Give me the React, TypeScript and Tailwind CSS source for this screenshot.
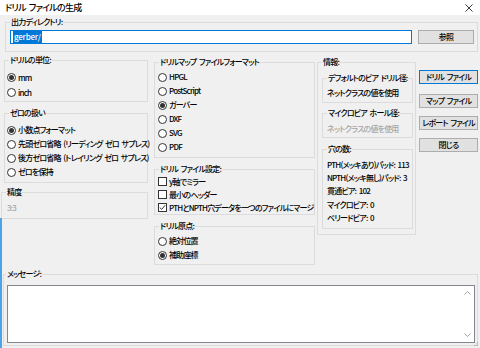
import type { ReactNode } from 'react'

const font = "font-['Noto_Sans_CJK_JP','Noto_Sans',sans-serif] [font-feature-settings:'palt']"

function Group({ label, className = '', legendClass = 'ml-[4px]', children }: { label: string; className?: string; legendClass?: string; children: ReactNode }) {
  return (
    <fieldset className={`m-0 min-w-0 border border-[#dcdcdc] p-0 ${className}`}>
      <legend className={`${legendClass} whitespace-nowrap px-[1px] leading-[12px]`}>{label}</legend>
      {children}
    </fieldset>
  )
}

function Radio({ label, checked = false, h = 'h-[14px]' }: { label: string; checked?: boolean; h?: string }) {
  return (
    <div className={`flex items-center gap-[2px] ${h}`}>
      <span className="flex h-[9px] w-[9px] shrink-0 items-center justify-center rounded-full border border-[#333] bg-white">
        {checked && <span className="h-[5px] w-[5px] rounded-full bg-[#333]" />}
      </span>
      <span className="whitespace-pre">{label}</span>
    </div>
  )
}

function Check({ label, checked = false }: { label: string; checked?: boolean }) {
  return (
    <div className="flex h-[13px] items-center gap-[2px]">
      <span className="flex h-[9px] w-[9px] shrink-0 items-center justify-center border border-[#333] bg-white">
        {checked && (
          <svg width="7" height="7" viewBox="0 0 7 7">
            <path d="M0.8 3.6 L2.7 5.4 L6.2 1.2" fill="none" stroke="#333" strokeWidth="1" />
          </svg>
        )}
      </span>
      <span className="whitespace-pre">{label}</span>
    </div>
  )
}

function Btn({ label, primary = false, className = '' }: { label: string; primary?: boolean; className?: string }) {
  return (
    <div
      className={`flex h-[14px] items-center justify-center whitespace-pre border bg-[#e1e1e1] ${primary ? 'border-[#0078d7]' : 'border-[#adadad]'} ${className}`}
    >
      {label}
    </div>
  )
}

export default function App() {
  return (
    <div
      className={`relative h-[348px] w-[480px] overflow-hidden bg-[#f0f0f0] text-[8px] font-medium leading-[12px] tracking-[-0.8px] text-black [word-spacing:1.5px] ${font}`}
    >
      {/* title bar */}
      <div className="flex h-[15px] items-center justify-between bg-white pl-[5px] pr-[7px] text-[9px] tracking-[-0.7px]">
        <span className="whitespace-pre">ドリル ファイルの生成</span>
        <svg width="8" height="8" viewBox="0 0 8 8">
          <path d="M0.5 0.5 L7.5 7.5 M7.5 0.5 L0.5 7.5" stroke="#222" strokeWidth="0.9" />
        </svg>
      </div>

      <div className="px-[4px]">
        {/* output directory */}
        <Group label="出力ディレクトリ:" className="ml-[1px] mt-[1px] w-[473px]">
          <div className="flex items-center gap-[6px] pb-[7px] pl-[4px] pr-[3px] pt-[2px]">
            <div className="flex h-[14px] flex-1 items-center border border-[#0078d7] bg-white pl-[2px]">
              <span className="bg-[#0078d7] px-[1px] tracking-[-0.2px] text-white">gerber/</span>
            </div>
            <Btn label="参照" className="w-[56px]" />
          </div>
        </Group>

        <div className="mt-[2px] flex items-start">
          {/* left column */}
          <div className="w-[144px] shrink-0">
            <Group label="ドリルの単位:">
              <div className="pb-[1px] pl-[2px] pt-[4px]">
                <Radio label="mm" checked h="h-[15px]" />
                <Radio label="inch" h="h-[15px]" />
              </div>
            </Group>
            <Group label="ゼロの扱い" className="mt-[5px]">
              <div className="pb-[3px] pl-[2px] pt-[4px]">
                <Radio label="小数点フォーマット" checked />
                <Radio label="先頭ゼロ省略 (リーディング ゼロ サプレス)" />
                <Radio label="後方ゼロ省略 (トレイリング ゼロ サプレス)" />
                <Radio label="ゼロを保持" />
              </div>
            </Group>
            <Group label="精度" className="-ml-[3px] mt-[3px] w-[147px]">
              <div className="my-[3px] flex h-[14px] items-center pl-[5px] text-[#a6a6a6]">3:3</div>
            </Group>
          </div>

          {/* middle column */}
          <div className="ml-[6px] mt-[2px] w-[161px] shrink-0">
            <Group label="ドリルマップ ファイルフォーマット">
              <div className="pb-[3px] pl-[3px] pt-[2px]">
                <Radio label="HPGL" />
                <Radio label="PostScript" />
                <Radio label="ガーバー" checked />
                <Radio label="DXF" />
                <Radio label="SVG" />
                <Radio label="PDF" />
              </div>
            </Group>
            <Group label="ドリル ファイル設定:" className="mt-[5px]">
              <div className="pl-[3px]">
                <Check label="y軸でミラー" />
                <Check label="最小のヘッダー" />
                <Check label="PTHとNPTH穴データを一つのファイルにマージ" checked />
              </div>
            </Group>
            <Group label="ドリル原点:" className="mt-[5px]">
              <div className="pb-[2px] pl-[3px] pt-[2px]">
                <Radio label="絶対位置" />
                <Radio label="補助座標" checked />
              </div>
            </Group>
          </div>

          {/* info column */}
          <div className="ml-[2px] mt-[2px] w-[99px] shrink-0">
            <Group label="情報:">
              <div className="pb-[5px] pl-[4px] pr-[2px] pt-[4px]">
                <Group label="デフォルトのビア ドリル径:">
                  <div className="my-[2px] flex h-[14px] items-center whitespace-nowrap pl-[4px]">ネットクラスの値を使用</div>
                </Group>
                <Group label="マイクロビア ホール径:" className="mt-[4px]">
                  <div className="mb-[1px] mt-[3px] flex h-[14px] items-center whitespace-nowrap pl-[4px] text-[#a6a6a6]">
                    ネットクラスの値を使用
                  </div>
                </Group>
                <Group label="穴の数:" className="mt-[5px]">
                  <div className="pb-[3px] pl-[4px] pt-[3px]">
                    {['PTH(メッキあり)パッド: 113', 'NPTH(メッキ無し)パッド: 3', '貫通ビア: 102', 'マイクロビア: 0', 'ベリードビア: 0'].map((t) => (
                      <div key={t} className="flex h-[13.4px] items-center whitespace-pre">
                        {t}
                      </div>
                    ))}
                  </div>
                </Group>
              </div>
            </Group>
          </div>

          {/* buttons */}
          <div className="ml-[3px] mt-[16px] w-[59px] shrink-0">
            <Btn label="ドリル ファイル" primary />
            <Btn label="マップ ファイル" className="mt-[10px]" />
            <Btn label="レポート ファイル" className="mt-[8px]" />
            <Btn label="閉じる" className="mt-[8px]" />
          </div>
        </div>

        {/* messages */}
        <Group label="メッセージ:" className="-ml-[1px] mt-[3px] w-[475px]" legendClass="ml-[2px]">
          <div className="pb-[2px] pl-[3px] pt-[5px]">
            <div className="flex h-[58px] w-[468px] border border-[#828790] bg-white">
              <div className="flex-1" />
              <div className="flex w-[13px] flex-col items-center justify-between py-[5px]">
                <svg width="7" height="4" viewBox="0 0 7 4">
                  <path d="M0.5 3.5 L3.5 0.5 L6.5 3.5" fill="none" stroke="#a0a0a0" strokeWidth="1" />
                </svg>
                <svg width="7" height="4" viewBox="0 0 7 4">
                  <path d="M0.5 0.5 L3.5 3.5 L6.5 0.5" fill="none" stroke="#a0a0a0" strokeWidth="1" />
                </svg>
              </div>
            </div>
          </div>
        </Group>
      </div>

      {/* resize grip */}
      <svg className="absolute bottom-[1px] right-[1px]" width="5" height="5" viewBox="0 0 5 5">
        <rect x="3" y="0" width="1" height="1" fill="#b0b0b0" />
        <rect x="1.5" y="1.5" width="1" height="1" fill="#b0b0b0" />
        <rect x="3" y="1.5" width="1" height="1" fill="#b0b0b0" />
        <rect x="0" y="3" width="1" height="1" fill="#b0b0b0" />
        <rect x="1.5" y="3" width="1" height="1" fill="#b0b0b0" />
        <rect x="3" y="3" width="1" height="1" fill="#b0b0b0" />
      </svg>

      {/* window edge behind */}
      <div className="absolute bottom-0 left-0 top-[218px] w-[2px] bg-[#4da3e8]" />
    </div>
  )
}
